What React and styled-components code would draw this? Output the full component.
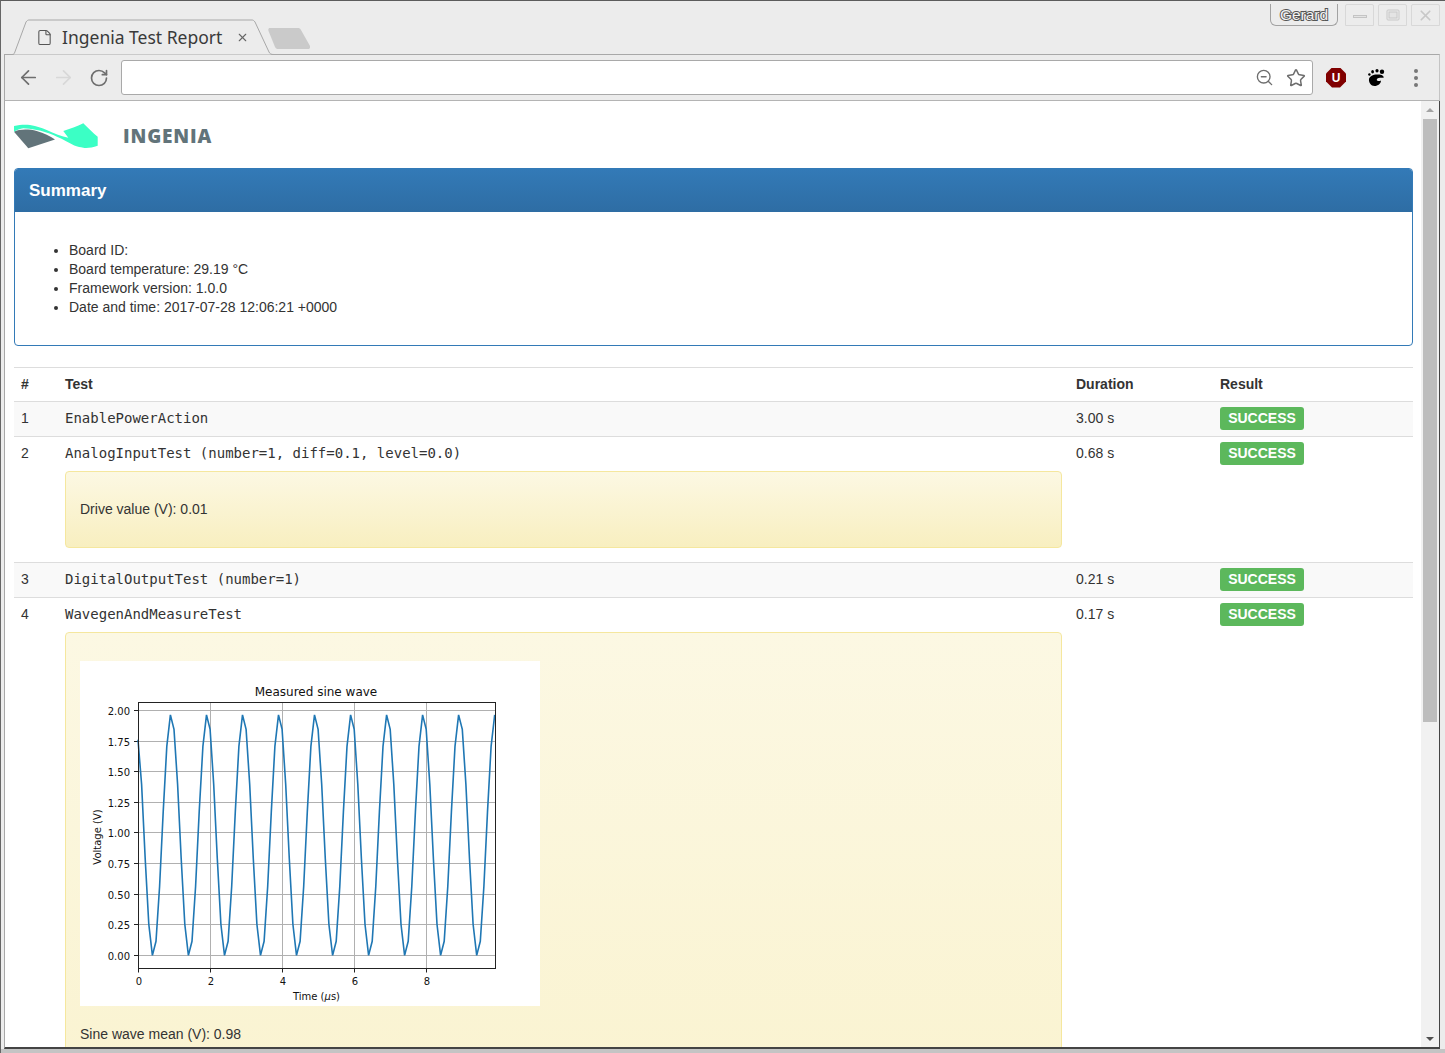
import { ArrowLeft, ArrowRight, File, RotateCw, Star, X, ZoomOut } from "lucide-react";
import styled, { createGlobalStyle } from "styled-components";

const GlobalStyle = createGlobalStyle`
  html, body {
    margin: 0;
    height: 100%;
    overflow: hidden;
  }

  body {
    font-family: "Liberation Sans", Arial, sans-serif;
    font-size: 14px;
    color: #333;
  }

  * {
    box-sizing: border-box;
  }
`;

const Window = styled.div`
  display: flex;
  flex-direction: column;
  height: 100vh;
  padding: 0 5px 4px 3px;
  background: #ececec;
  border-top: 1px solid #5c5c5c;
  border-left: 1px solid #666;
  box-shadow: inset 0 -4px 0 #c4c4c4;
`;

const TabStrip = styled.div`
  display: flex;
  align-items: flex-end;
  flex: none;
  height: 53px;
  padding-left: 8px;
`;

const Tab = styled.div`
  position: relative;
  z-index: 1;
  display: flex;
  align-items: center;
  flex: none;
  width: 262px;
  height: 36px;
  margin-bottom: -1px;
  padding: 0 0 0 24px;
  font-family: "Noto Sans", "Open Sans", sans-serif;
  font-size: 17.5px;
  color: #3a3a3a;

  > svg.shape {
    position: absolute;
    inset: 0;
    z-index: -1;
  }
`;

const TabTitle = styled.span`
  margin-left: 9px;
  white-space: nowrap;
`;

const TabClose = styled.span`
  display: flex;
  margin-left: 14px;
  color: #666;
`;

const NewTab = styled.div`
  flex: none;
  width: 42px;
  height: 21px;
  margin: 0 0 5px -6px;
`;

const WindowControls = styled.div`
  display: flex;
  align-self: flex-start;
  margin-left: auto;
  margin-top: 3px;
`;

const UserBadge = styled.div`
  width: 68px;
  height: 22px;
  margin-right: 3px;
  border: 1px solid #a2a2a2;
  border-top: 0;
  border-radius: 0 0 6px 6px;
  text-align: center;
  font-size: 15.5px;
  line-height: 22px;
  color: #f2f2f2;
  -webkit-text-stroke: 2px #555;
  paint-order: stroke fill;
`;

const ControlButton = styled.div`
  display: flex;
  align-items: center;
  justify-content: center;
  width: 29px;
  height: 22px;
  margin-left: 4px;
  border: 1px solid #d8d8d8;
  border-radius: 2px 2px 0 0;
  color: #c8c8c8;
`;

const Toolbar = styled.div`
  display: flex;
  align-items: center;
  flex: none;
  height: 47px;
  padding: 0 3px 0 6px;
  border: 1px solid #a8a8a8;
  border-bottom-color: #b4b4b4;
  border-right-color: #c4c4c4;
`;

const NavButton = styled.div`
  display: flex;
  align-items: center;
  justify-content: center;
  flex: none;
  width: 35px;
  color: ${(p) => (p.$disabled ? "#d8d8d8" : "#6e6e6e")};
`;

const Omnibox = styled.div`
  display: flex;
  align-items: center;
  justify-content: flex-end;
  flex: 1;
  height: 35px;
  margin: 0 3px 0 5px;
  padding-right: 1px;
  border: 1px solid #a9a9a9;
  border-radius: 3px;
  background: #fff;
`;

const OmniAction = styled.div`
  display: flex;
  align-items: center;
  justify-content: center;
  width: 31px;
  color: #6e6e6e;
`;

const ExtensionSlot = styled.div`
  display: flex;
  align-items: center;
  justify-content: center;
  flex: none;
  width: 40px;
`;

const Shield = styled.div`
  display: flex;
  align-items: center;
  justify-content: center;
  width: 20px;
  height: 20px;
  clip-path: polygon(30% 0, 70% 0, 100% 30%, 100% 70%, 70% 100%, 30% 100%, 0 70%, 0 30%);
  background: #800000;
  color: #fff;
  font-size: 12px;
  font-weight: bold;
`;

const Kebab = styled.div`
  display: flex;
  flex-direction: column;
  gap: 3px;

  span {
    width: 4px;
    height: 4px;
    border-radius: 50%;
    background: #777;
  }
`;

const Viewport = styled.div`
  display: flex;
  flex: 1;
  min-height: 0;
  background: #fff;
  border-left: 1px solid #a8a8a8;
  border-right: 1px solid #444;
  border-bottom: 2px solid #444;
`;

const Page = styled.main`
  flex: 1;
  min-width: 0;
  overflow: hidden;
  padding: 0 8px 0 9px;
`;

const Scrollbar = styled.div`
  display: flex;
  flex-direction: column;
  align-items: center;
  flex: none;
  width: 18px;
  background: #f1f1f1;
`;

const ScrollArrow = styled.div`
  display: flex;
  align-items: center;
  justify-content: center;
  flex: none;
  height: 17px;
  width: 100%;

  &::before {
    content: "";
    border-left: 4px solid transparent;
    border-right: 4px solid transparent;
    border-bottom: ${(p) => (p.$down ? "0" : "4px solid #a3a3a3")};
    border-top: ${(p) => (p.$down ? "4px solid #505050" : "0")};
  }
`;

const ScrollThumb = styled.div`
  flex: none;
  width: 14px;
  height: 603px;
  margin-top: 1px;
  background: #bdbdbd;
`;

const ScrollSpace = styled.div`
  flex: 1;
`;

const Brand = styled.header`
  display: flex;
  align-items: center;
  gap: 24px;
  height: 67px;
  padding-top: 2px;

  svg {
    display: block;
  }
`;

const BrandName = styled.span`
  font-family: "Open Sans", sans-serif;
  font-size: 19px;
  font-weight: 800;
  letter-spacing: 0.85px;
  color: #62747a;
`;

const Panel = styled.section`
  height: 178px;
  border: 1px solid #337ab7;
  border-radius: 4px;
  overflow: hidden;
`;

const PanelHeading = styled.h3`
  margin: 0;
  padding: 10px 14px;
  background: linear-gradient(to bottom, #337ab7, #2e6da4);
  color: #fff;
  font-size: 17px;
  font-weight: bold;
  line-height: 23px;
`;

const SummaryList = styled.ul`
  margin: 0;
  padding: 29px 15px 0 54px;
  line-height: 19px;
`;

const Results = styled.table`
  width: 100%;
  margin-top: 21px;
  table-layout: fixed;
  border-collapse: separate;
  border-spacing: 0;
  line-height: 23px;

  th, td {
    padding: 5px 7px;
    border-top: 1px solid #ddd;
    text-align: left;
    vertical-align: top;
  }

  td {
    padding-bottom: 6px;
  }
`;

const Row = styled.tr`
  background: ${(p) => (p.$striped ? "#f9f9f9" : "#fff")};
`;

const TestName = styled.code`
  font-family: "DejaVu Sans Mono", monospace;
  font-size: 14px;
`;

const ResultLabel = styled.span`
  display: inline-block;
  width: 84px;
  height: 23px;
  border-radius: 3px;
  background: #5cb85c;
  color: #fff;
  font-weight: bold;
  text-align: center;
  vertical-align: top;
  line-height: 22px;
`;

const Note = styled.div`
  margin: 6px 0 8px;
  padding: 28px 14px;
  min-height: ${(p) => p.$minHeight || "0"};
  border: 1px solid #f5e79e;
  border-radius: 4px;
  background: linear-gradient(to bottom, #fcf8e3, #f8efc0);
  line-height: 19px;
`;

const NoteText = styled.p`
  margin: ${(p) => (p.$spaced ? "19px" : "0")} 0 0;
`;

const PlotFrame = styled.svg`
  display: block;
  background: #fff;
  font-family: "DejaVu Sans", sans-serif;
  font-size: 10px;
  fill: #111;
`;

const tests = [
  { id: 1, name: "EnablePowerAction", duration: "3.00 s", striped: true },
  { id: 2, name: "AnalogInputTest (number=1, diff=0.1, level=0.0)", duration: "0.68 s" },
  { id: 3, name: "DigitalOutputTest (number=1)", duration: "0.21 s", striped: true },
  { id: 4, name: "WavegenAndMeasureTest", duration: "0.17 s" },
];

const plot = { left: 58, right: 415.5, top: 41.5, bottom: 307.5, zero: 294.4, two: 49.4, perUs: 36.1 };
const yTicks = ["0.00", "0.25", "0.50", "0.75", "1.00", "1.25", "1.50", "1.75", "2.00"];
const xTicks = [0, 2, 4, 6, 8];

const toY = (v) => plot.zero - (v * (plot.zero - plot.two)) / 2;
const toX = (t) => plot.left + t * plot.perUs;
const snap = (n) => Math.floor(n) + 0.5;

// ten samples per period, so every cycle has the same kinks
const wave = Array.from({ length: 100 }, (_, k) => {
  const t = k * 0.0998;
  const v = k === 0 ? 1.76 : 0.98 + 0.99 * Math.cos(2 * Math.PI * ((k % 10) / 10 - 0.919));
  return `${toX(t).toFixed(1)},${toY(Math.max(v, 0)).toFixed(1)}`;
}).join(" ");

function SineChart() {
  return (
    <PlotFrame width="460" height="345" viewBox="0 0 460 345">
      {yTicks.map((label, i) => {
        const y = snap(toY(i * 0.25));
        return (
          <g key={label}>
            <line x1={plot.left} x2={plot.right} y1={y} y2={y} stroke="#b0b0b0" />
            <line x1={plot.left - 4} x2={plot.left} y1={y} y2={y} stroke="#222" />
            <text x={plot.left - 8} y={y + 4} textAnchor="end">{label}</text>
          </g>
        );
      })}
      {xTicks.map((tick) => {
        const x = snap(toX(tick));
        return (
          <g key={tick}>
            <line x1={x} x2={x} y1={plot.top} y2={plot.bottom} stroke="#b0b0b0" />
            <line x1={x} x2={x} y1={plot.bottom} y2={plot.bottom + 4} stroke="#222" />
            <text x={x + 0.5} y={plot.bottom + 16} textAnchor="middle">{tick}</text>
          </g>
        );
      })}
      <polyline points={wave} fill="none" stroke="#1f77b4" strokeWidth="1.6" />
      <rect
        x={snap(plot.left)}
        y={plot.top}
        width={plot.right - snap(plot.left)}
        height={plot.bottom - plot.top}
        fill="none"
        stroke="#222"
      />
      <text x="236" y="35" textAnchor="middle" fontSize="12">Measured sine wave</text>
      <text x="236.5" y="339" textAnchor="middle">
        Time (<tspan fontStyle="italic">μ</tspan>s)
      </text>
      <text x="21" y="176" textAnchor="middle" transform="rotate(-90 21 176)">Voltage (V)</text>
    </PlotFrame>
  );
}

function IngeniaLogo() {
  return (
    <svg width="85" height="26" viewBox="0 0 85 26">
      <path d="M0 8.7C5 6 15 6 22.7 8C30 10 36 13 41 16.5L14.3 25.3Z" fill="#62747a" />
      <path
        d="M0 3C6 1.5 12 1.5 16 2C23 3 28 5 32.7 7C40 10.5 48 13.5 54.3 14.7L49.3 8C56 6 63 3.5 69.3 .3C74 5 79 10 83.7 13.7V22.7C78 24.7 73 25.2 69.3 24.7C63 24 60 22.5 56 20.3C50 17 45 14.5 39.3 12C33 9.5 28 8 22.7 7C17 6 13 5.5 9.3 5.3C6 5.5 3 7 0 8.7Z"
        fill="#3bffc5"
      />
    </svg>
  );
}

function GnomeFoot() {
  return (
    <svg width="17" height="18" viewBox="0 0 17 18">
      <circle cx="1.4" cy="5.5" r="1.2" />
      <ellipse cx="4.6" cy="2.8" rx="1.4" ry="1.7" />
      <ellipse cx="9" cy="1.7" rx="1.6" ry="1.7" />
      <circle cx="14" cy="2.8" r="2.2" />
      <path d="M1 10C1.5 7.5 5 5.5 9 5.5C12.5 5.5 15.5 6 15.8 8.5C14 9 9.5 8 8.8 10.5C8.4 12 11 12.5 13 11.5C13 14.5 10 17 6.5 17C3 17 .5 13.5 1 10Z" />
    </svg>
  );
}

function ReportTab() {
  return (
    <Tab>
      <svg className="shape" width="262" height="36" viewBox="0 0 262 36">
        <path d="M0 35.5C1.5 35.5 2 35 2.5 34L14 3C15 1.5 16 1 17 1H240C241 1 242 1.5 243 3L257 33C258 35 259 35.5 262 35.5" fill="#ececec" stroke="#a8a8a8" />
      </svg>
      <File size={17} strokeWidth={1.5} color="#555" />
      <TabTitle>Ingenia Test Report</TabTitle>
      <TabClose>
        <X size={13} strokeWidth={2} />
      </TabClose>
    </Tab>
  );
}

function BrowserChrome() {
  return (
    <>
      <TabStrip>
        <ReportTab />
        <NewTab>
          <svg width="42" height="21" viewBox="0 0 42 21">
            <path d="M2 0H30C31.5 0 32 .5 33 2L42 18C42.5 20 41.5 21 40 21H10C8.5 21 8 20.5 7 19L.5 3C0 1 .5 0 2 0Z" fill="#cacaca" />
          </svg>
        </NewTab>
        <WindowControls>
          <UserBadge>Gerard</UserBadge>
          <ControlButton>
            <svg width="14" height="8" viewBox="0 0 14 8">
              <rect x=".5" y="4.5" width="13" height="2" fill="#e4e4e4" stroke="#c4c4c4" />
            </svg>
          </ControlButton>
          <ControlButton>
            <svg width="14" height="12" viewBox="0 0 14 12">
              <rect x="1" y="1" width="12" height="10" rx="1" fill="none" stroke="#c8c8c8" />
              <rect x="3" y="3" width="8" height="6" fill="#e4e4e4" stroke="#c8c8c8" />
            </svg>
          </ControlButton>
          <ControlButton>
            <X size={17} strokeWidth={2.4} />
          </ControlButton>
        </WindowControls>
      </TabStrip>
      <Toolbar>
        <NavButton>
          <ArrowLeft size={23} strokeWidth={1.8} />
        </NavButton>
        <NavButton $disabled>
          <ArrowRight size={23} strokeWidth={1.8} />
        </NavButton>
        <NavButton>
          <RotateCw size={20} strokeWidth={2} />
        </NavButton>
        <Omnibox>
          <OmniAction>
            <ZoomOut size={19} strokeWidth={1.7} />
          </OmniAction>
          <OmniAction>
            <Star size={20} strokeWidth={1.8} />
          </OmniAction>
        </Omnibox>
        <ExtensionSlot>
          <Shield>U</Shield>
        </ExtensionSlot>
        <ExtensionSlot>
          <GnomeFoot />
        </ExtensionSlot>
        <ExtensionSlot>
          <Kebab>
            <span />
            <span />
            <span />
          </Kebab>
        </ExtensionSlot>
      </Toolbar>
    </>
  );
}

function TestDetails({ id }) {
  if (id === 2) {
    return (
      <Note>
        <NoteText>Drive value (V): 0.01</NoteText>
      </Note>
    );
  }
  if (id === 4) {
    return (
      <Note $minHeight="860px">
        <SineChart />
        <NoteText $spaced>Sine wave mean (V): 0.98</NoteText>
      </Note>
    );
  }
  return null;
}

function App() {
  return (
    <>
      <GlobalStyle />
      <Window>
        <BrowserChrome />
        <Viewport>
          <Page>
            <Brand>
              <IngeniaLogo />
              <BrandName>INGENIA</BrandName>
            </Brand>
            <Panel>
              <PanelHeading>Summary</PanelHeading>
              <SummaryList>
                <li>Board ID:</li>
                <li>Board temperature: 29.19 °C</li>
                <li>Framework version: 1.0.0</li>
                <li>Date and time: 2017-07-28 12:06:21 +0000</li>
              </SummaryList>
            </Panel>
            <Results>
              <colgroup>
                <col width="44" />
                <col width="1011" />
                <col width="144" />
                <col width="200" />
              </colgroup>
              <thead>
                <tr>
                  <th>#</th>
                  <th>Test</th>
                  <th>Duration</th>
                  <th>Result</th>
                </tr>
              </thead>
              <tbody>
                {tests.map((test) => (
                  <Row key={test.id} $striped={test.striped}>
                    <td>{test.id}</td>
                    <td>
                      <TestName>{test.name}</TestName>
                      <TestDetails id={test.id} />
                    </td>
                    <td>{test.duration}</td>
                    <td>
                      <ResultLabel>SUCCESS</ResultLabel>
                    </td>
                  </Row>
                ))}
              </tbody>
            </Results>
          </Page>
          <Scrollbar>
            <ScrollArrow />
            <ScrollThumb />
            <ScrollSpace />
            <ScrollArrow $down />
          </Scrollbar>
        </Viewport>
      </Window>
    </>
  );
}

export default App;
